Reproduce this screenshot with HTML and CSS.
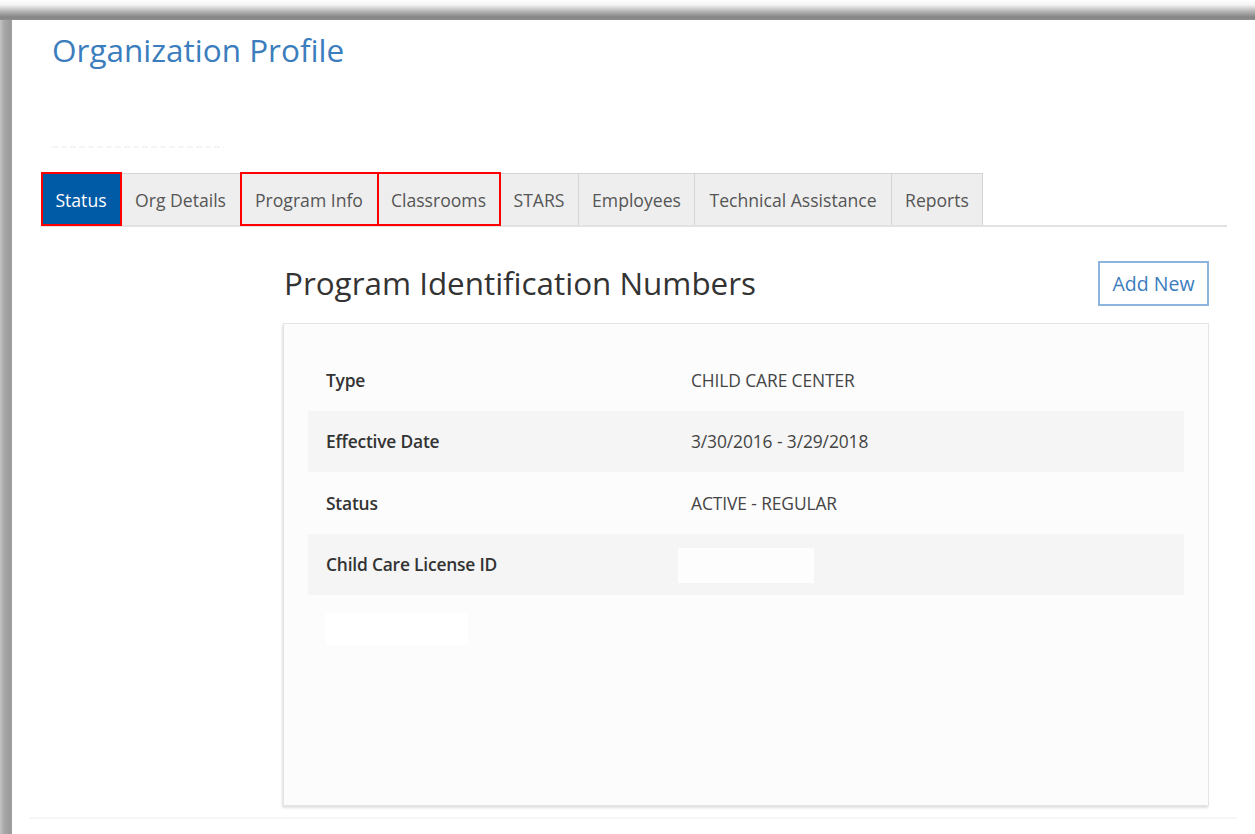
FILE: index.html
```html
<!DOCTYPE html>
<html lang="en">
<head>
<meta charset="utf-8">
<title>Organization Profile</title>
<link rel="stylesheet" href="styles.css">
</head>
<body>
<div class="window">
  <header class="page-head">
    <h1 class="page-title">Organization Profile</h1>
    <div class="org-name">&nbsp;</div>
  </header>

  <nav class="tabs">
    <a class="tab active marked">Status</a>
    <a class="tab">Org Details</a>
    <a class="tab marked">Program Info</a>
    <a class="tab marked">Classrooms</a>
    <a class="tab">STARS</a>
    <a class="tab">Employees</a>
    <a class="tab">Technical Assistance</a>
    <a class="tab">Reports</a>
  </nav>

  <main class="content">
    <div class="section-head">
      <h2 class="section-title">Program Identification Numbers</h2>
      <button class="btn-outline">Add New</button>
    </div>
    <section class="card">
      <div class="row">
        <span class="label">Type</span>
        <span class="value">CHILD CARE CENTER</span>
      </div>
      <div class="row alt">
        <span class="label">Effective Date</span>
        <span class="value">3/30/2016 - 3/29/2018</span>
      </div>
      <div class="row">
        <span class="label">Status</span>
        <span class="value">ACTIVE - REGULAR</span>
      </div>
      <div class="row alt">
        <span class="label">Child Care License ID</span>
        <span class="value"><span class="blank blank-id"></span></span>
      </div>
      <div class="card-foot"><span class="blank blank-link"></span></div>
    </section>
  </main>
  <div class="foot-rule"></div>
</div>
</body>
</html>
```

FILE: styles.css
```css
html, body {
  margin: 0;
  padding: 0;
  height: 100%;
}

body {
  font-family: "Open Sans", "Liberation Sans", sans-serif;
  color: #333;
  background:
    linear-gradient(to bottom, #ffffff 0, #f2f2f2 5px, #b8b8b8 11px, #858585 17px, #8c8c8c 20px) top left / 100% 20px no-repeat,
    linear-gradient(to right, #c4c4c4 0, #a8a8a8 4px, #9b9b9b 10px, #a0a0a0 12px) top left / 12px 100% no-repeat,
    #ffffff;
  padding: 20px 0 0 12px;
  box-sizing: border-box;
  overflow: hidden;
}

.window {
  background: #fff;
  height: 814px;
  padding: 0 28px 0 30px;
  box-sizing: border-box;
}

.page-head {
  padding-left: 10px;
}

.page-title {
  margin: 0;
  padding-top: 10px;
  font-size: 31.5px;
  font-weight: 400;
  color: #3b7dbd;
  line-height: 40px;
}

.org-name {
  height: 2px;
  width: 172px;
  margin-top: 76px;
  background: repeating-linear-gradient(to right, #f3f3f3 0 6px, transparent 6px 9px);
  opacity: 0.8;
}

.tabs {
  display: flex;
  margin-top: 25px;
  border-bottom: 2px solid #e2e2e2;
  height: 52px;
  align-items: stretch;
}

.tab {
  display: flex;
  align-items: center;
  justify-content: center;
  padding: 0;
  font-size: 17.6px;
  color: #555;
  background: #eeeeee;
  border: 1px solid #d4d4d4;
  border-left: 0;
  border-bottom: 0;
  box-sizing: border-box;
  cursor: pointer;
}

.tab.active {
  background: #005ba6;
  color: #fff;
  border-color: #005ba6;
}

.tab.marked {
  outline: 2px solid #ff0000;
  outline-offset: -1px;
  position: relative;
  z-index: 1;
}

.tab:nth-child(1) { width: 79px; }
.tab:nth-child(2) { width: 120px; }
.tab:nth-child(3) { width: 137px; }
.tab:nth-child(4) { width: 122px; }
.tab:nth-child(5) { width: 79px; }
.tab:nth-child(6) { width: 116px; }
.tab:nth-child(7) { width: 197px; }
.tab:nth-child(8) { width: 91px; }

.content {
  margin-left: 241px;
  width: 926px;
}

.section-head {
  display: flex;
  justify-content: space-between;
  align-items: center;
  padding-top: 33px;
  height: 46px;
}

.section-title {
  margin: 0;
  font-size: 31.4px;
  font-weight: 400;
  color: #333;
  padding-left: 1px;
  margin-top: -1px;
}

.btn-outline {
  font-family: inherit;
  font-size: 19.5px;
  color: #3b7dbd;
  background: #fff;
  border: 2px solid #8db4dc;
  width: 111px;
  height: 45px;
  padding: 0;
  margin-right: 0;
  cursor: pointer;
}

.card {
  margin-top: 17px;
  height: 483px;
  box-sizing: border-box;
  background: #fcfcfc;
  border: 1px solid #e4e4e4;
  box-shadow: -1px 2px 2px rgba(0, 0, 0, 0.12);
  padding: 25px 24px 0 24px;
}

.row {
  display: flex;
  align-items: center;
  height: 61.5px;
  font-size: 17.4px;
}

.row.alt {
  background: #f5f5f5;
}

.label {
  width: 365px;
  padding-left: 18px;
  font-weight: 600;
  color: #333;
  letter-spacing: -0.2px;
}

.value {
  color: #444;
  letter-spacing: -0.1px;
}

.blank {
  display: block;
  background: #fdfdfd;
}

.blank-id {
  width: 136px;
  height: 35px;
  margin-left: -13px;
  margin-top: 2px;
}

.card-foot {
  padding: 18px 0 0 18px;
}

.blank-link {
  width: 142px;
  height: 32px;
  background: #ffffff;
}

.foot-rule {
  margin: 11px -10px 0 -12px;
  height: 2px;
  background: #f6f6f6;
}
```
